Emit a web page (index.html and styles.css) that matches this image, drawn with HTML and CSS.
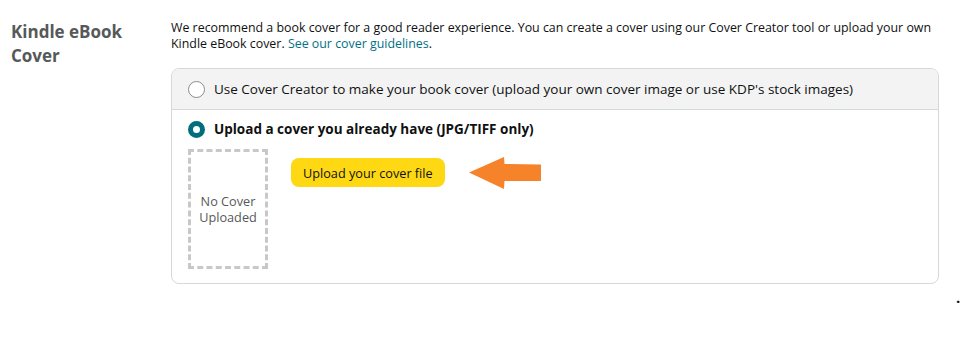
FILE: index.html
```html
<!DOCTYPE html>
<html lang="en">
<head>
    <meta charset="UTF-8">
    <title>Kindle eBook Cover</title>
    <link rel="stylesheet" href="styles.css">
</head>
<body>
    <div class="section">
        <div class="section-title">Kindle eBook Cover</div>
        <div class="section-body">
            <p class="intro">We recommend a book cover for a good reader experience. You can create a cover using our Cover Creator tool or upload your own Kindle eBook cover. <a href="#">See our cover guidelines</a>.</p>

            <div class="options">
                <label class="option option-top">
                    <span class="radio"></span>
                    <span>Use Cover Creator to make your book cover (upload your own cover image or use KDP's stock images)</span>
                </label>
                <div class="option option-selected">
                    <label class="option-head">
                        <span class="radio checked"></span>
                        <span class="option-label">Upload a cover you already have (JPG/TIFF only)</span>
                    </label>
                    <div class="upload-row">
                        <div class="cover-placeholder">No Cover<br>Uploaded</div>
                        <button class="upload-btn">Upload your cover file</button>
                        <svg class="arrow" width="74" height="34" viewBox="0 0 74 34">
                            <path d="M1 16.5 L36 1 L36.5 8 L73 8.5 L73 25 L36.5 25 L36 33 Z" fill="#f6822a"/>
                        </svg>
                    </div>
                </div>
            </div>
        </div>
    </div>
    <div class="dot">.</div>
</body>
</html>
```

FILE: styles.css
```css
body {
    margin: 0;
    font-family: 'Open Sans', 'Noto Sans', sans-serif;
    color: #0f1111;
    background: #fff;
}
.section {
    display: flex;
    padding: 20px 22px 0 11px;
}
.section-title {
    width: 160px;
    font-size: 17px;
    font-weight: bold;
    line-height: 24px;
    color: #565959;
}
.section-body { flex: 1; }
.intro {
    margin: 0 -12px 16px 0;
    font-size: 12.4px;
    line-height: 16px;
}
.intro a { color: #007185; text-decoration: none; }
.options {
    border: 1px solid #d5d9d9;
    border-radius: 8px;
    overflow: hidden;
}
.option {
    display: flex;
    align-items: center;
    gap: 9px;
    padding: 0 16px;
    font-size: 13.5px;
}
.option-top {
    height: 40px;
    background: #f3f3f3;
    border-bottom: 1px solid #d5d9d9;
}
.option-selected {
    display: block;
    padding: 10px 16px 14px;
}
.option-head { display: flex; align-items: center; gap: 9px; }
.option-label { font-weight: bold; }
.radio {
    width: 17px;
    height: 17px;
    border: 1px solid #888c8c;
    border-radius: 50%;
    background: #fff;
    box-sizing: border-box;
}
.radio.checked {
    border: 5px solid #016e7e;
}
.upload-row {
    display: flex;
    align-items: flex-start;
    margin-top: 11px;
}
.cover-placeholder {
    width: 80px;
    height: 120px;
    box-sizing: border-box;
    border: 3px dashed #c8c8c8;
    display: flex;
    align-items: center;
    justify-content: center;
    text-align: center;
    font-size: 12.7px;
    line-height: 16px;
    color: #565959;
}
.upload-btn {
    margin: 9px 0 0 23px;
    height: 29px;
    padding: 0 12px;
    background: #ffd814;
    border: none;
    border-radius: 8px;
    font-family: inherit;
    font-size: 12.7px;
    color: #0f1111;
}
.arrow { margin: 7px 0 0 23px; }
.dot {
    position: absolute;
    left: 956px;
    top: 287px;
    font-size: 15px;
    font-weight: bold;
}
```
